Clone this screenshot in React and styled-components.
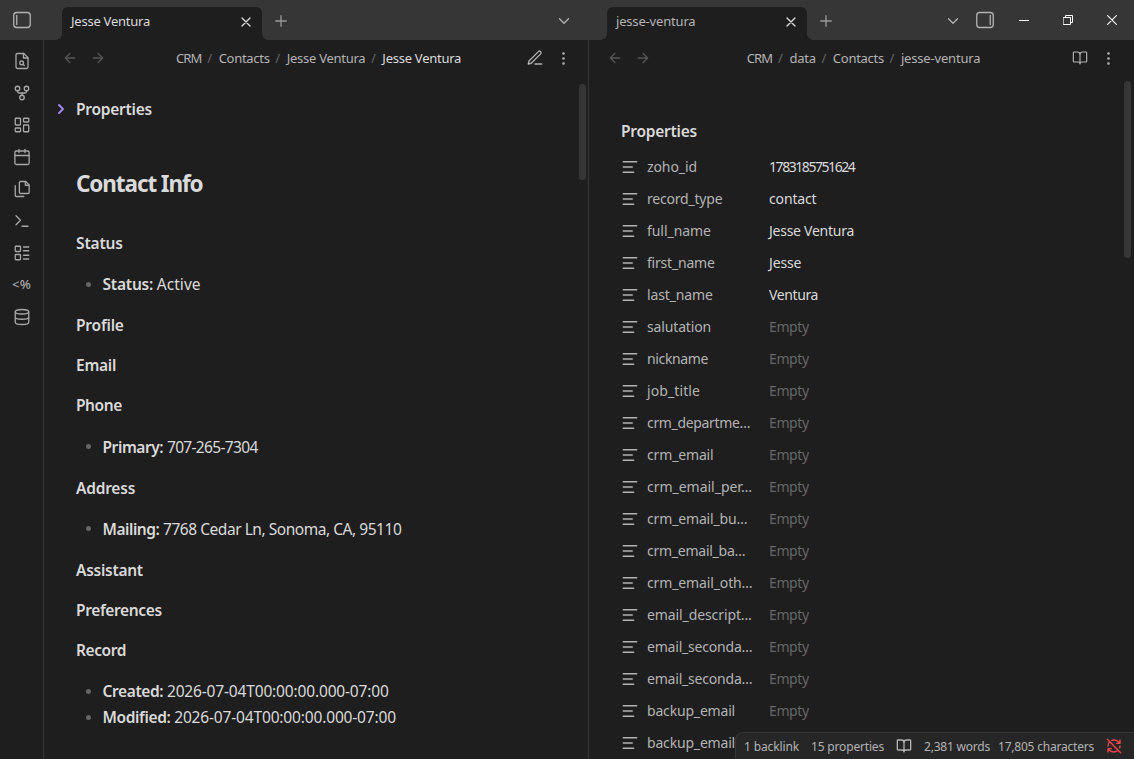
import React from 'react';
import styled, { createGlobalStyle } from 'styled-components';

const GlobalStyle = createGlobalStyle`
  * {
    box-sizing: border-box;
  }
  body {
    margin: 0;
    background: #1e1e1e;
    color: #dadada;
    font-family: "Noto Sans", "Open Sans", sans-serif;
    font-size: 15.5px;
    overflow: hidden;
  }
`;

const Window = styled.div`
  display: flex;
  flex-direction: column;
  width: 1134px;
  height: 759px;
  overflow: hidden;
  background: #1e1e1e;
  position: relative;
`;

const Svg = styled.svg`
  display: block;
  flex: none;
  width: ${props => props.$size}px;
  height: ${props => props.$size}px;
  fill: none;
  stroke: currentColor;
  stroke-width: ${props => props.$stroke};
  stroke-linecap: round;
  stroke-linejoin: round;
`;

// letter spacing is tuned per string
const Text = styled.span`
  letter-spacing: ${props => props.$track || 0}px;
  white-space: nowrap;
`;

/* ---- title bar ---- */

const TitleBar = styled.header`
  display: flex;
  flex: none;
  height: 40px;
  background: #363636;
  color: #b3b3b3;
`;

const TabGroup = styled.div`
  display: flex;
  align-items: flex-end;
  width: ${props => props.$width}px;
  padding-left: 18px;
`;

const Tab = styled.div`
  position: relative;
  display: flex;
  align-items: center;
  justify-content: space-between;
  width: 200px;
  height: 33px;
  padding: 0 8px 5px 9px;
  border-radius: 6px 6px 0 0;
  background: #1e1e1e;
  color: ${props => props.$active ? '#dadada' : '#b3b3b3'};
  font-size: 13px;

  &::before,
  &::after {
    content: '';
    position: absolute;
    bottom: 0;
    width: 6px;
    height: 6px;
  }
  &::before {
    left: -6px;
    background: radial-gradient(circle at 0 0, transparent 5.5px, #1e1e1e 6px);
  }
  &::after {
    right: -6px;
    background: radial-gradient(circle at 100% 0, transparent 5.5px, #1e1e1e 6px);
  }
`;

const TabClose = styled.span`
  color: #dadada;
  padding-top: 2px;
`;

const BarButton = styled.span`
  display: flex;
  align-items: center;
  justify-content: center;
  width: ${props => props.$width || 24}px;
  height: 40px;
  padding-top: ${props => props.$drop || 0}px;
  margin-left: ${props => props.$push ? 'auto' : `${props.$gap || 0}px`};
  color: ${props => props.$color || '#b3b3b3'};
`;

const Corner = styled(BarButton)`
  width: 44px;
`;

const WindowControls = styled.div`
  display: flex;
  margin-left: 5px;
`;

/* ---- panes ---- */

const Workspace = styled.div`
  display: flex;
  flex: 1;
  min-height: 0;
`;

const Ribbon = styled.nav`
  display: flex;
  flex-direction: column;
  align-items: center;
  width: 44px;
  padding-top: 5px;
  border-right: 1px solid #363636;
  color: #a8a8a8;
`;

const RibbonItem = styled.span`
  display: flex;
  align-items: center;
  justify-content: center;
  width: 44px;
  height: 32px;
`;

const TemplateGlyph = styled.span`
  padding-bottom: 2px;
  font-size: 13px;
  font-weight: 500;
  letter-spacing: 0.3px;
`;

const Pane = styled.section`
  display: flex;
  flex-direction: column;
  width: ${props => props.$width}px;
  border-right: ${props => props.$divider ? '1px solid #363636' : 'none'};
`;

const ViewHeader = styled.div`
  display: flex;
  align-items: center;
  flex: none;
  height: 36px;
  padding: 0 ${props => props.$right}px 0 12px;
  font-size: 13px;
`;

const ActionGroup = styled.div`
  display: flex;
  color: ${props => props.$dim ? '#555' : '#b3b3b3'};
`;

const Action = styled.span`
  display: flex;
  align-items: center;
  justify-content: center;
  width: 28px;
  height: 28px;
`;

const Breadcrumbs = styled.div`
  display: flex;
  flex: 1;
  justify-content: center;
  padding: 0 0 1px 4px;
  color: #b3b3b3;
`;

const Separator = styled.span`
  width: 17px;
  padding-right: 1px;
  text-align: center;
  color: #666;
`;

const Current = styled(Text)`
  color: #dadada;
`;

const PaneBody = styled.div`
  display: flex;
  flex: 1;
  min-height: 0;
  justify-content: space-between;
  overflow: hidden;
`;

const Scrollbar = styled.div`
  flex: none;
  width: 7px;
  height: ${props => props.$height}px;
  margin: ${props => props.$top}px ${props => props.$right}px 0 0;
  border-radius: 4px;
  background: #363636;
`;

/* ---- note ---- */

const Note = styled.article`
  padding: 21px 0 0 32px;
`;

const Fold = styled.div`
  display: flex;
  align-items: center;
  gap: 7px;
  height: 24px;
  margin-left: -23px;
  color: #a68af9;
`;

const Heading = styled.div`
  height: 24px;
  line-height: 24px;
  font-weight: 600;
  color: #dadada;
`;

const Title = styled.h1`
  height: 30px;
  margin: 47.5px 0 32.7px;
  line-height: 30px;
  font-size: 22.5px;
  font-weight: 700;
`;

const SubHeading = styled(Heading)`
  margin-top: 16px;
`;

const List = styled.ul`
  margin: 16.15px 0;
  padding: 0;
  list-style: none;
`;

const Item = styled.li`
  display: flex;
  align-items: center;
  height: 26px;
  padding-left: 10px;

  &::before {
    content: '';
    width: 5px;
    height: 5px;
    margin-right: 11.5px;
    border-radius: 50%;
    background: #666;
  }
`;

const Label = styled(Text)`
  font-weight: 600;
  margin-right: 3.7px;
`;

/* ---- properties ---- */

const Properties = styled.div`
  padding: 43px 0 0 32px;
`;

const PropertyRow = styled.div`
  display: flex;
  align-items: center;
  height: 32px;
  font-size: 14px;
  color: #b3b3b3;
`;

const PropertyKey = styled.div`
  width: 122px;
  padding: 0 0 1.5px 8px;
`;

const PropertyValue = styled.div`
  padding: 0 0 1.5px 8px;
  color: ${props => props.$empty ? '#666' : '#dadada'};
`;

const PropertyTitle = styled(Heading)`
  margin-bottom: 8px;
`;

/* ---- status bar ---- */

const StatusBar = styled.footer`
  position: absolute;
  right: 0;
  bottom: 0;
  display: flex;
  align-items: center;
  width: 399px;
  height: 27px;
  padding-left: 8px;
  border: solid #363636;
  border-width: 1px 0 0 1px;
  border-radius: 8px 0 0 0;
  background: #262626;
  color: #b3b3b3;
  font-size: 12px;
`;

const StatusItem = styled.span`
  width: ${props => props.$width}px;
  color: ${props => props.$color || 'inherit'};
`;

const ICONS = {
  left: <><rect x="1" y="2" width="22" height="20" rx="4" /><path d="M5 6v12" /></>,
  right: <><rect x="1" y="2" width="22" height="20" rx="4" /><path d="M19 6v12" /></>,
  close: <path d="M18 6 6 18M6 6l12 12" />,
  plus: <path d="M5 12h14M12 5v14" />,
  down: <path d="m6 9 6 6 6-6" />,
  chevron: <path d="m9 18 6-6-6-6" />,
  back: <path d="m12 19-7-7 7-7M19 12H5" />,
  forward: <path d="m12 5 7 7-7 7M5 12h14" />,
  pen: <path d="M12 20h9M16.500 3.500a2.120 2.120 0 0 1 3 3L7 19l-4 1 1-4Z" />,
  more: <><circle cx="12" cy="12" r="1" /><circle cx="12" cy="5" r="1" /><circle cx="12" cy="19" r="1" /></>,
  book: <path d="M12 7v14M3 18a1 1 0 0 1-1-1V4a1 1 0 0 1 1-1h5a4 4 0 0 1 4 4 4 4 0 0 1 4-4h5a1 1 0 0 1 1 1v13a1 1 0 0 1-1 1h-6a3 3 0 0 0-3 3 3 3 0 0 0-3-3z" />,
  text: <path d="M21 5H3M15 12H3M17 19H3" />,
  search: <><path d="M14.500 2H6a2 2 0 0 0-2 2v16a2 2 0 0 0 2 2h12a2 2 0 0 0 2-2V7.500L14.500 2z" /><path d="M14 2v6h6" /><circle cx="11.500" cy="14.500" r="2.500" /><path d="M13.250 16.250 15 18" /></>,
  fork: <><circle cx="12" cy="18" r="3" /><circle cx="6" cy="6" r="3" /><circle cx="18" cy="6" r="3" /><path d="M18 9v1a2 2 0 0 1-2 2H8a2 2 0 0 1-2-2V9M12 12v3" /></>,
  dashboard: <><rect x="3" y="3" width="7" height="9" rx="1" /><rect x="14" y="3" width="7" height="5" rx="1" /><rect x="14" y="12" width="7" height="9" rx="1" /><rect x="3" y="16" width="7" height="5" rx="1" /></>,
  calendar: <><rect x="2.500" y="4" width="19" height="18" rx="2" /><path d="M16 2v4M8 2v4M2.500 10h19" /></>,
  files: <><path d="M17 2h-6.900A1.600 1.600 0 0 0 8.500 3.600v12.800A1.600 1.600 0 0 0 10.100 18h9.800a1.600 1.600 0 0 0 1.600-1.600V6.500L17 2z" /><path d="M16.500 2v5h5M3 7.600v12.800A1.600 1.600 0 0 0 4.600 22h9.800" /></>,
  terminal: <path d="m4 17 6-6-6-6M12 19h8" />,
  list: <><rect x="3" y="3" width="7" height="7" rx="1" /><rect x="3" y="14" width="7" height="7" rx="1" /><path d="M14 4h7M14 9h7M14 15h7M14 20h7" /></>,
  database: <><ellipse cx="12" cy="5" rx="9" ry="3" /><path d="M3 5v14a9 3 0 0 0 18 0V5M3 12a9 3 0 0 0 18 0" /></>,
  syncOff: <path d="M21 8 18.740 5.740A9.750 9.750 0 0 0 12 3c-1.240 0-2.430.23-3.520.65M8 16H3v5M3 12c0-2.500.95-4.770 2.500-6.500M3 16l2.260 2.260A9.750 9.750 0 0 0 12 21c2.490 0 4.740-.93 6.450-2.460M21 12c0 1-.16 1.970-.45 2.880M21 3v5h-5M22 22 2 2" />,
};

function Icon({ name, size = 18, stroke = 1.75 }) {
  return (
    <Svg viewBox="0 0 24 24" $size={size} $stroke={stroke}>{ICONS[name]}</Svg>
  );
}

const RIBBON = ['search', 'fork', 'dashboard', 'calendar', 'files', 'terminal', 'list', null, 'database'];

const SECTIONS = [
  { name: 'Status', track: -0.15, items: [['Status:', -0.2, 'Active', 0.05]] },
  { name: 'Profile', track: -0.2 },
  { name: 'Email', track: -0.27 },
  { name: 'Phone', track: -0.42, items: [['Primary:', -0.42, '707-265-7304', -0.66]] },
  { name: 'Address', track: -0.22, items: [['Mailing:', -0.46, '7768 Cedar Ln, Sonoma, CA, 95110', -0.46]] },
  { name: 'Assistant', track: -0.27 },
  { name: 'Preferences', track: -0.36 },
  {
    name: 'Record',
    track: -0.42,
    items: [
      ['Created:', -0.38, '2026-07-04T00:00:00.000-07:00', -0.16],
      ['Modified:', -0.36, '2026-07-04T00:00:00.000-07:00', -0.16],
    ],
  },
];

const PROPERTIES = [
  ['zoho_id', -0.09, '1783185751624', -1.44],
  ['record_type', -0.2, 'contact', -0.15],
  ['full_name', -0.05, 'Jesse Ventura', -0.26],
  ['first_name', -0.2, 'Jesse', -0.15],
  ['last_name', -0.12, 'Ventura', -0.39],
  ['salutation', -0.15],
  ['nickname', -0.35],
  ['job_title', 0.1],
  ['crm_departme…', -0.34],
  ['crm_email', -0.15],
  ['crm_email_per…', -0.02],
  ['crm_email_bu…', -0.15],
  ['crm_email_ba…', -0.25],
  ['crm_email_oth…', -0.13],
  ['email_descript…', -0.1],
  ['email_seconda…', -0.2],
  ['email_seconda…', -0.2],
  ['backup_email', -0.18],
  ['backup_email', -0.18, ' '],
];

function Header({ mode, right = 12, children }) {
  return (
    <ViewHeader $right={right}>
      <ActionGroup $dim>
        <Action><Icon name="back" size={16} stroke={2} /></Action>
        <Action><Icon name="forward" size={16} stroke={2} /></Action>
      </ActionGroup>
      <Breadcrumbs>{children}</Breadcrumbs>
      <ActionGroup>
        <Action><Icon name={mode} size={mode === 'book' ? 16 : 18} /></Action>
        <Action><Icon name="more" size={17} /></Action>
      </ActionGroup>
    </ViewHeader>
  );
}

function Tabs({ title, track, active, width }) {
  return (
    <TabGroup $width={width}>
      <Tab $active={active}>
        <Text $track={track}>{title}</Text>
        <TabClose><Icon name="close" size={16} stroke={2} /></TabClose>
      </Tab>
      <BarButton $width={38} $drop={2} $color="#999"><Icon name="plus" /></BarButton>
      <BarButton $push $drop={2}><Icon name="down" /></BarButton>
    </TabGroup>
  );
}

export default function App() {
  return (
    <Window>
      <GlobalStyle />
      <TitleBar>
        <Corner><Icon name="left" /></Corner>
        <Tabs title="Jesse Ventura" track={-0.24} active width={532} />
        <BarButton $width={13} />
        <Tabs title="jesse-ventura" track={-0.18} width={376} />
        <BarButton $gap={8}><Icon name="right" /></BarButton>
        <WindowControls>
          <BarButton $width={44} $color="#fff">
            <Svg viewBox="0 0 10 10" $size={10} $stroke={1}><path d="M0 5.500h10" /></Svg>
          </BarButton>
          <BarButton $width={44} $color="#fff">
            <Svg viewBox="0 0 10 10" $size={10} $stroke={1}>
              <path d="M.5 2.500h7v7h-7zM2.500 2.500v-2h7v7h-2" />
            </Svg>
          </BarButton>
          <BarButton $width={44} $color="#fff">
            <Svg viewBox="0 0 10 10" $size={10} $stroke={1.1}><path d="m.3.3 9.400 9.400M9.700.3.3 9.700" /></Svg>
          </BarButton>
        </WindowControls>
      </TitleBar>

      <Workspace>
        <Ribbon>
          {RIBBON.map((name, i) => (
            <RibbonItem key={i}>
              {name ? <Icon name={name} /> : <TemplateGlyph>&lt;%</TemplateGlyph>}
            </RibbonItem>
          ))}
        </Ribbon>

        <Pane $width={545} $divider>
          <Header mode="pen" right={11}>
            <Text $track={-0.8}>CRM</Text>
            <Separator>/</Separator>
            <Text $track={-0.28}>Contacts</Text>
            <Separator>/</Separator>
            <Text $track={-0.26}>Jesse Ventura</Text>
            <Separator>/</Separator>
            <Current $track={-0.26}>Jesse Ventura</Current>
          </Header>
          <PaneBody>
            <Note>
              <Fold>
                <Icon name="chevron" size={16} stroke={2.75} />
                <Heading><Text $track={-0.24}>Properties</Text></Heading>
              </Fold>
              <Title><Text $track={-1.1}>Contact Info</Text></Title>
              {SECTIONS.map(section => (
                <React.Fragment key={section.name}>
                  <SubHeading><Text $track={section.track}>{section.name}</Text></SubHeading>
                  {section.items && (
                    <List>
                      {section.items.map(([label, labelTrack, value, track]) => (
                        <Item key={label}>
                          <Label $track={labelTrack}>{label}</Label>
                          <Text $track={track}>{value}</Text>
                        </Item>
                      ))}
                    </List>
                  )}
                </React.Fragment>
              ))}
            </Note>
            <Scrollbar $top={8} $right={2} $height={96} />
          </PaneBody>
        </Pane>

        <Pane $width={545}>
          <Header mode="book">
            <Text $track={-0.8}>CRM</Text>
            <Separator>/</Separator>
            <Text $track={-0.2}>data</Text>
            <Separator>/</Separator>
            <Text $track={-0.28}>Contacts</Text>
            <Separator>/</Separator>
            <Text $track={-0.18}>jesse-ventura</Text>
          </Header>
          <PaneBody>
            <Properties>
              <PropertyTitle><Text $track={-0.24}>Properties</Text></PropertyTitle>
              {PROPERTIES.map(([key, keyTrack, value, track], i) => (
                <PropertyRow key={i}>
                  <Icon name="text" />
                  <PropertyKey><Text $track={keyTrack}>{key}</Text></PropertyKey>
                  <PropertyValue $empty={!value}>
                    <Text $track={value ? track : -0.38}>{value || 'Empty'}</Text>
                  </PropertyValue>
                </PropertyRow>
              ))}
            </Properties>
            <Scrollbar $top={5} $right={3} $height={177} />
          </PaneBody>
        </Pane>
      </Workspace>

      <StatusBar>
        <StatusItem $width={67}><Text $track={-0.13}>1 backlink</Text></StatusItem>
        <StatusItem $width={85}><Text $track={-0.17}>15 properties</Text></StatusItem>
        <StatusItem $width={28}><Icon name="book" size={16} stroke={2} /></StatusItem>
        <StatusItem $width={74}><Text $track={-0.21}>2,381 words</Text></StatusItem>
        <StatusItem $width={108}><Text $track={-0.21}>17,805 characters</Text></StatusItem>
        <StatusItem $color="#fb464c"><Icon name="syncOff" size={16} stroke={2} /></StatusItem>
      </StatusBar>
    </Window>
  );
}
